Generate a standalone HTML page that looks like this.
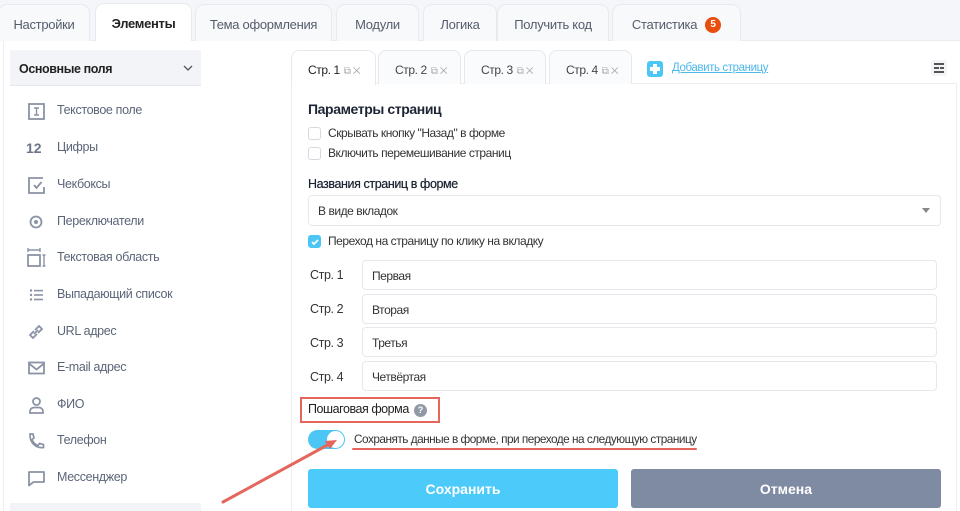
<!DOCTYPE html>
<html><head><meta charset="utf-8"><style>
*{box-sizing:border-box;margin:0;padding:0}
html,body{width:960px;height:511px;overflow:hidden}
body{background:#fff;font-family:"Liberation Sans",sans-serif;color:#333;position:relative}
.a{position:absolute}
.topbar{left:0;top:0;width:960px;height:41px;background:#f5f6f9;border-bottom:1px solid #e9ebf0}
.tab{position:absolute;top:4px;height:37px;border:1px solid #e8eaef;border-bottom:none;border-radius:9px 9px 0 0;background:#f8f9fb;font-size:13px;color:#555d6b;text-align:center;line-height:40px;letter-spacing:-0.3px}
.tab.act{background:#fff;color:#222;font-weight:bold;height:38px;top:3px}
.badge{display:inline-block;width:16px;height:16px;border-radius:50%;background:#e94e0f;color:#fff;font-size:10px;line-height:16px;font-weight:bold;vertical-align:2px;margin-left:8px;letter-spacing:0}
.side{left:3px;top:41px;width:1px;height:470px;background:#eceef2}
.sh{left:10px;top:50px;width:191px;height:36px;background:#f2f4f8;border-bottom:1px solid #e6e8ee;font-size:12.5px;font-weight:bold;color:#222;padding:12px 9px;letter-spacing:-0.4px}
.it{position:absolute;left:57px;font-size:12.5px;color:#5b6577;letter-spacing:-0.35px}
.ic{position:absolute;left:26px;width:20px;height:20px}
.vl{left:291px;top:83px;width:1px;height:428px;background:#eceef2}
.pt{position:absolute;top:50px;height:34px;border:1px solid #e6e8ee;border-bottom:none;border-radius:8px 8px 0 0;background:#fafbfc;font-size:12px;color:#444;padding:12px 0 0 16px;letter-spacing:-0.4px}
.pt.act{background:#fff;color:#222}
.pt small{color:#aaa;font-size:10px;margin-left:4px}
.panel{left:291px;top:83px;width:666px;height:428px;border:1px solid #eceef2;border-bottom:none}
.h{position:absolute;font-size:14px;font-weight:bold;color:#1d2433;letter-spacing:-0.4px}
.lb{position:absolute;font-size:12px;color:#333;letter-spacing:-0.45px}
.cb{position:absolute;left:308px;width:13px;height:13px;border:1px solid #d6d9df;border-radius:3px;background:#fff}
.inp{position:absolute;left:362px;width:575px;height:30px;border:1px solid #e6e8ec;border-radius:4px;font-size:12px;color:#333;padding:8px 9px;letter-spacing:-0.45px}
.rl{position:absolute;left:310px;font-size:12.5px;color:#333;letter-spacing:-0.4px}
</style></head><body>
<div class="a topbar"></div>
<div class="tab" style="left:-2px;width:92px">Настройки</div>
<div class="tab act" style="left:95px;width:97px">Элементы</div>
<div class="tab" style="left:195px;width:137px">Тема оформления</div>
<div class="tab" style="left:336px;width:83px">Модули</div>
<div class="tab" style="left:423px;width:74px">Логика</div>
<div class="tab" style="left:497px;width:112px">Получить код</div>
<div class="tab" style="left:612px;width:129px">Статистика<span class="badge">5</span></div>

<div class="a side"></div>
<div class="a sh">Основные поля<svg class="a" style="left:173px;top:15px" width="10" height="7" viewBox="0 0 10 7"><path d="M1 1l4 4 4-4" fill="none" stroke="#555" stroke-width="1.3"/></svg></div>

<svg class="ic" style="top:101px" viewBox="0 0 20 20"><rect x="3" y="3" width="15" height="15" fill="none" stroke="#8a93a5" stroke-width="1.8"/><path d="M8 7h5M8 14h5M10.5 7v7" stroke="#8a93a5" stroke-width="1.4"/></svg>
<div class="it" style="top:103px">Текстовое поле</div>
<div class="ic" style="top:140px;font-size:14px;font-weight:bold;color:#6b7487;left:26px">12</div>
<div class="it" style="top:140px">Цифры</div>
<svg class="ic" style="top:175px" viewBox="0 0 20 20"><path d="M17 3H3v15h15v-6" fill="none" stroke="#8a93a5" stroke-width="1.8"/><path d="M8 10l2.5 3 5-6" fill="none" stroke="#8a93a5" stroke-width="1.8"/></svg>
<div class="it" style="top:177px">Чекбоксы</div>
<svg class="ic" style="top:212px" viewBox="0 0 20 20"><circle cx="10" cy="10" r="5.5" fill="none" stroke="#8a93a5" stroke-width="1.8"/><circle cx="10" cy="10" r="2" fill="#8a93a5"/></svg>
<div class="it" style="top:214px">Переключатели</div>
<svg class="ic" style="top:248px;width:22px" viewBox="0 0 22 20"><path d="M2 2h12M2 0v4M14 0v4" stroke="#8a93a5" stroke-width="1.4"/><rect x="2" y="7" width="12" height="11" fill="none" stroke="#8a93a5" stroke-width="1.8"/><path d="M18 7v11M16.5 7h3M16.5 18h3" stroke="#8a93a5" stroke-width="1.4"/></svg>
<div class="it" style="top:250px">Текстовая область</div>
<svg class="ic" style="top:285px" viewBox="0 0 20 20"><g fill="#8a93a5"><circle cx="5" cy="5.5" r="1.2"/><circle cx="5" cy="10" r="1.2"/><circle cx="5" cy="14.5" r="1.2"/><rect x="8" y="4.8" width="9" height="1.6"/><rect x="8" y="9.2" width="9" height="1.6"/><rect x="8" y="13.7" width="9" height="1.6"/></g></svg>
<div class="it" style="top:287px">Выпадающий список</div>
<svg class="ic" style="top:322px" viewBox="0 0 20 20"><g fill="none" stroke="#8a93a5" stroke-width="1.8"><path d="M8 9l-4 4 3 3 4-4"/><path d="M12 11l4-4-3-3-4 4"/><path d="M8 12l4-4"/></g></svg>
<div class="it" style="top:324px">URL адрес</div>
<svg class="ic" style="top:358px" viewBox="0 0 20 20"><rect x="3" y="4.5" width="15" height="11" fill="none" stroke="#8a93a5" stroke-width="1.8"/><path d="M3 5.5l7.5 6 7.5-6" fill="none" stroke="#8a93a5" stroke-width="1.8"/></svg>
<div class="it" style="top:360px">E-mail адрес</div>
<svg class="ic" style="top:395px" viewBox="0 0 20 20"><circle cx="10.5" cy="6.5" r="3.5" fill="none" stroke="#8a93a5" stroke-width="1.8"/><path d="M4 18v-1.5a4 4 0 0 1 4-4h5a4 4 0 0 1 4 4V18z" fill="none" stroke="#8a93a5" stroke-width="1.8"/></svg>
<div class="it" style="top:397px">ФИО</div>
<svg class="ic" style="top:431px" viewBox="0 0 20 20"><path d="M4 3h3l1 4-2 1.5c1 3 3 5 6 6l1.5-2 4 1v3c-8 1-14-5-13.5-13.5z" fill="none" stroke="#8a93a5" stroke-width="1.7"/></svg>
<div class="it" style="top:433px">Телефон</div>
<svg class="ic" style="top:468px" viewBox="0 0 20 20"><path d="M3 4h15v10H7.5L3 17.5z" fill="none" stroke="#8a93a5" stroke-width="1.8" stroke-linejoin="round"/></svg>
<div class="it" style="top:470px">Мессенджер</div>
<div class="a" style="left:10px;top:503px;width:191px;height:8px;background:#f2f4f8"></div>

<div class="a vl"></div>
<div class="a panel"></div>
<div class="pt act" style="left:291px;width:85px;height:35px">Стр. 1<small>⧉ ✕</small></div>
<div class="pt" style="left:378px;width:83px">Стр. 2<small>⧉ ✕</small></div>
<div class="pt" style="left:464px;width:82px">Стр. 3<small>⧉ ✕</small></div>
<div class="pt" style="left:549px;width:83px">Стр. 4<small>⧉ ✕</small></div>
<div class="a" style="left:647px;top:61px;width:16px;height:16px;background:#4cc6f4;border-radius:3px"><div class="a" style="left:6px;top:3px;width:4px;height:10px;background:#fff"></div><div class="a" style="left:3px;top:6px;width:10px;height:4px;background:#fff"></div></div>
<div class="a" style="left:672px;top:62px;font-size:11.5px;color:#4cb8ea;text-decoration:underline;letter-spacing:-0.4px">Добавить страницу</div>
<div class="a" style="left:931px;top:60px;width:16px;height:16px;background:#f2f4f7;border-radius:3px"><div class="a" style="left:3px;top:3px;width:10px;height:1.5px;background:#555"></div><div class="a" style="left:3px;top:7px;width:5px;height:1.5px;background:#555"></div><div class="a" style="left:9px;top:7px;width:4px;height:1.5px;background:#555"></div><div class="a" style="left:3px;top:11px;width:10px;height:1.5px;background:#555"></div></div>

<div class="h" style="left:308px;top:101px">Параметры страниц</div>
<div class="cb" style="top:127px"></div><div class="lb" style="left:328px;top:126px">Скрывать кнопку "Назад" в форме</div>
<div class="cb" style="top:147px"></div><div class="lb" style="left:328px;top:146px">Включить перемешивание страниц</div>
<div class="h" style="left:308px;top:177px;font-size:12.5px;font-weight:normal;color:#1d2433;text-shadow:0 0 0.5px #1d2433">Названия страниц в форме</div>
<div class="inp" style="left:308px;top:195px;width:633px;height:31px">В виде вкладок</div>
<div class="a" style="left:922px;top:208px;width:0;height:0;border-left:4px solid transparent;border-right:4px solid transparent;border-top:5px solid #888"></div>
<div class="cb" style="top:235px;background:#4cc6f4;border-color:#4cc6f4"><svg class="a" style="left:1px;top:1px" width="10" height="10" viewBox="0 0 10 10"><path d="M2 5l2 2 4-4" fill="none" stroke="#fff" stroke-width="1.8"/></svg></div>
<div class="lb" style="left:328px;top:234px">Переход на страницу по клику на вкладку</div>
<div class="rl" style="top:268px">Стр. 1</div><div class="inp" style="top:260px">Первая</div>
<div class="rl" style="top:302px">Стр. 2</div><div class="inp" style="top:294px">Вторая</div>
<div class="rl" style="top:336px">Стр. 3</div><div class="inp" style="top:327px">Третья</div>
<div class="rl" style="top:370px">Стр. 4</div><div class="inp" style="top:361px">Четвёртая</div>

<div class="a" style="left:300px;top:397px;width:140px;height:26px;border:2px solid #e4665d"></div>
<div class="lb" style="left:308px;top:402px;font-size:12.5px;color:#222">Пошаговая форма</div>
<div class="a" style="left:414px;top:404px;width:13px;height:13px;border-radius:50%;background:#9299a6;color:#fff;font-size:9px;font-weight:bold;text-align:center;line-height:13px">?</div>
<div class="a" style="left:308px;top:430px;width:37px;height:19px;border-radius:10px;background:#4cc6f4"></div>
<div class="a" style="left:327px;top:431px;width:17px;height:17px;border-radius:50%;background:#fff"></div>
<div class="lb" style="left:354px;top:432px;color:#333;font-size:11.8px;letter-spacing:-0.5px">Сохранять данные в форме, при переходе на следующую страницу</div>
<div class="a" style="left:352px;top:448px;width:345px;height:2px;background:#e4665d;border-radius:1px"></div>

<div class="a" style="left:308px;top:469px;width:310px;height:39px;background:#4ccbfb;border-radius:3px;color:#fff;font-size:14px;font-weight:bold;text-align:center;line-height:40px">Сохранить</div>
<div class="a" style="left:631px;top:469px;width:310px;height:39px;background:#7f8aa3;border-radius:3px;color:#fff;font-size:14px;font-weight:bold;text-align:center;line-height:40px">Отмена</div>

<svg class="a" style="left:0;top:0" width="960" height="511"><line x1="223" y1="502" x2="333" y2="442" stroke="#e4665d" stroke-width="3" stroke-linecap="round"/><path d="M337 440l-12 1 5 8z" fill="#e4665d"/></svg>
</body></html>
